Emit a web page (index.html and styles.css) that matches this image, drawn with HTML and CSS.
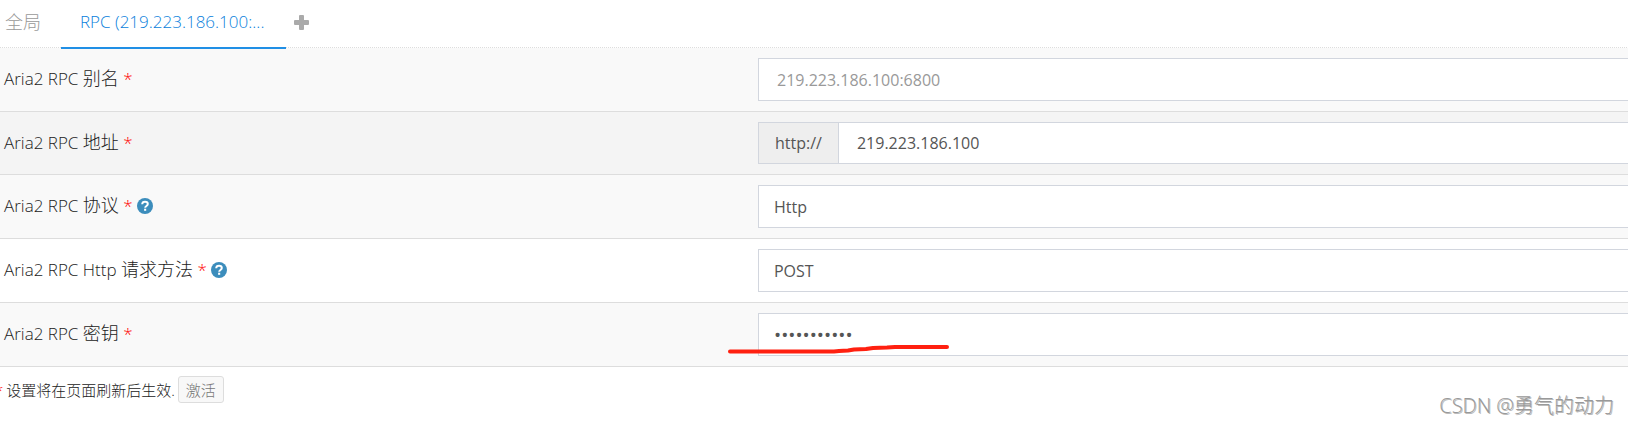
FILE: index.html
```html
<!DOCTYPE html>
<html lang="zh-CN">
<head>
  <meta charset="UTF-8" />
  <meta name="viewport" content="width=device-width, initial-scale=1.0"/>
  <title>AriaNg</title>
  <link rel="stylesheet" href="styles.css">
</head>
<body>

<nav class="tabs">
  <a class="tab tab-global" href="#global"><span class="zh">全局</span></a>
  <a class="tab active" href="#rpc">RPC (219.223.186.100:...</a>
  <button class="tab-add" type="button" aria-label="添加">
    <svg width="15" height="15" viewBox="0 0 15 15"><path d="M6 0h3q1 0 1 1v4h4q1 0 1 1v3q0 1-1 1h-4v4q0 1-1 1H6q-1 0-1-1v-4H1q-1 0-1-1V6q0-1 1-1h4V1q0-1 1-1z" fill="#aaa"/></svg>
  </button>
</nav>

<form class="settings">
  <div class="row shaded">
    <label for="alias">Aria2 RPC <span class="zh">别名</span> <span class="required">*</span></label>
    <input class="field inset" type="text" id="alias" placeholder="219.223.186.100:6800" />
  </div>

  <div class="row hover">
    <label for="host">Aria2 RPC <span class="zh">地址</span> <span class="required">*</span></label>
    <div class="group">
      <span class="addon">http://</span>
      <input class="field inset" type="text" id="host" value="219.223.186.100" />
    </div>
  </div>

  <div class="row shaded">
    <label for="protocol">Aria2 RPC <span class="zh">协议</span> <span class="required">*</span>
      <svg class="help" width="16" height="16" viewBox="0 0 16 16"><circle cx="8" cy="8" r="8" fill="#3c8dbc"/><path d="M5.2 6.2C5.3 4.5 6.4 3.8 8 3.8s2.8.9 2.8 2.3c0 2-2.6 1.8-2.6 3.6" fill="none" stroke="#fff" stroke-width="2"/><path d="M7.1 10.7h2.1v2.1H7.1z" fill="#fff"/></svg>
    </label>
    <select class="field" id="protocol"><option>Http</option></select>
  </div>

  <div class="row">
    <label for="method">Aria2 RPC Http <span class="zh">请求方法</span> <span class="required">*</span>
      <svg class="help" width="16" height="16" viewBox="0 0 16 16"><circle cx="8" cy="8" r="8" fill="#3c8dbc"/><path d="M5.2 6.2C5.3 4.5 6.4 3.8 8 3.8s2.8.9 2.8 2.3c0 2-2.6 1.8-2.6 3.6" fill="none" stroke="#fff" stroke-width="2"/><path d="M7.1 10.7h2.1v2.1H7.1z" fill="#fff"/></svg>
    </label>
    <select class="field" id="method"><option>POST</option></select>
  </div>

  <div class="row shaded">
    <label for="secret">Aria2 RPC <span class="zh">密钥</span> <span class="required">*</span></label>
    <div class="group">
      <input class="field secret" type="password" id="secret" value="abcdefghijk" />
      <svg class="mark" width="224" height="12" viewBox="0 0 224 12"><path d="M3 8.5H107L112 8 121 7.5 127 6.5 139 6 146 5 160 4.5 168 4H220" fill="none" stroke="#ff2010" stroke-width="4" stroke-linecap="round" stroke-linejoin="round"/></svg>
    </div>
  </div>
</form>

<div class="footer">
  <span class="required">*</span>
  <span>设置将在页面刷新后生效.</span>
  <button class="activate" type="button">激活</button>
</div>

<div class="watermark">CSDN @勇气的动力</div>

</body>
</html>
```
FILE: styles.css
```css
* {
  box-sizing: border-box;
}
body {
  margin: 0;
  background: #fff;
  color: #222;
  font-family: "Open Sans", "Noto Sans CJK SC", sans-serif;
  font-size: 16px;
  line-height: 24px;
  overflow: hidden;
}
input,
select,
button {
  font: inherit;
}
.zh {
  font-size: 18px;
}
.tabs {
  display: flex;
  height: 48px;
  background: linear-gradient(90deg, #ddd 50%, transparent 50%) 0 100% / 2px 1px repeat-x;
}
.tab {
  height: 49px;
  padding: 10px 19px;
  color: #999;
  font-size: 17px;
  font-weight: 300;
  text-decoration: none;
  white-space: nowrap;
}
.tab-global {
  padding: 10px 20px 10px 5px;
}
.tab.active {
  position: relative;
  padding: 10px 22px 10px 19px;
  color: #0a7fdc;
  border-bottom: 2px solid #208fe5;
}
.tab-add {
  display: flex;
  align-items: center;
  height: 44px;
  padding: 0 8px;
  border: none;
  background: none;
}
.row {
  display: grid;
  grid-template-columns: 46.56% 1fr;
  align-items: center;
  padding: 10px 0;
  border-bottom: 1px solid #ddd;
}
.shaded {
  background: #f9f9f9;
}
.hover {
  background: #f4f4f4;
}
label {
  padding: 0 0 2px 4px;
  font-size: 17px;
  font-weight: 300;
}
.required {
  color: #f00;
}
.help {
  vertical-align: -2px;
}
.field {
  display: block;
  width: 100%;
  height: 43px;
  padding: 0 15px;
  border: 1px solid #d2d6de;
  border-right: none;
  border-radius: 0;
  background: #fff;
  color: #555;
  appearance: none;
  outline: none;
}
.inset {
  padding: 0 18px;
}
.field::placeholder {
  color: #999;
  opacity: 1;
}
.group {
  display: flex;
  position: relative;
}
.hover .field {
  height: 42px;
}
.addon {
  display: flex;
  align-items: center;
  padding: 0 16px;
  border: 1px solid #d2d6de;
  border-right: none;
  background: #eee;
  color: #555;
}
.secret {
  font-size: 19px;
}
.mark {
  position: absolute;
  left: -31px;
  top: 30px;
}
.footer {
  display: flex;
  align-items: center;
  gap: 3px;
  padding-top: 9px;
  margin-left: -5px;
  font-size: 15px;
  font-weight: 300;
  line-height: 20px;
}
.activate {
  height: 27px;
  padding: 0 7px;
  border: 1px solid #ddd;
  border-radius: 3px;
  background: #f8f8f8;
  color: #777;
}
.watermark {
  position: absolute;
  right: 14px;
  bottom: 7px;
  color: #999;
  font-size: 20px;
  font-weight: 300;
  text-shadow: 1px 1px 0 #bbb;
}
```
